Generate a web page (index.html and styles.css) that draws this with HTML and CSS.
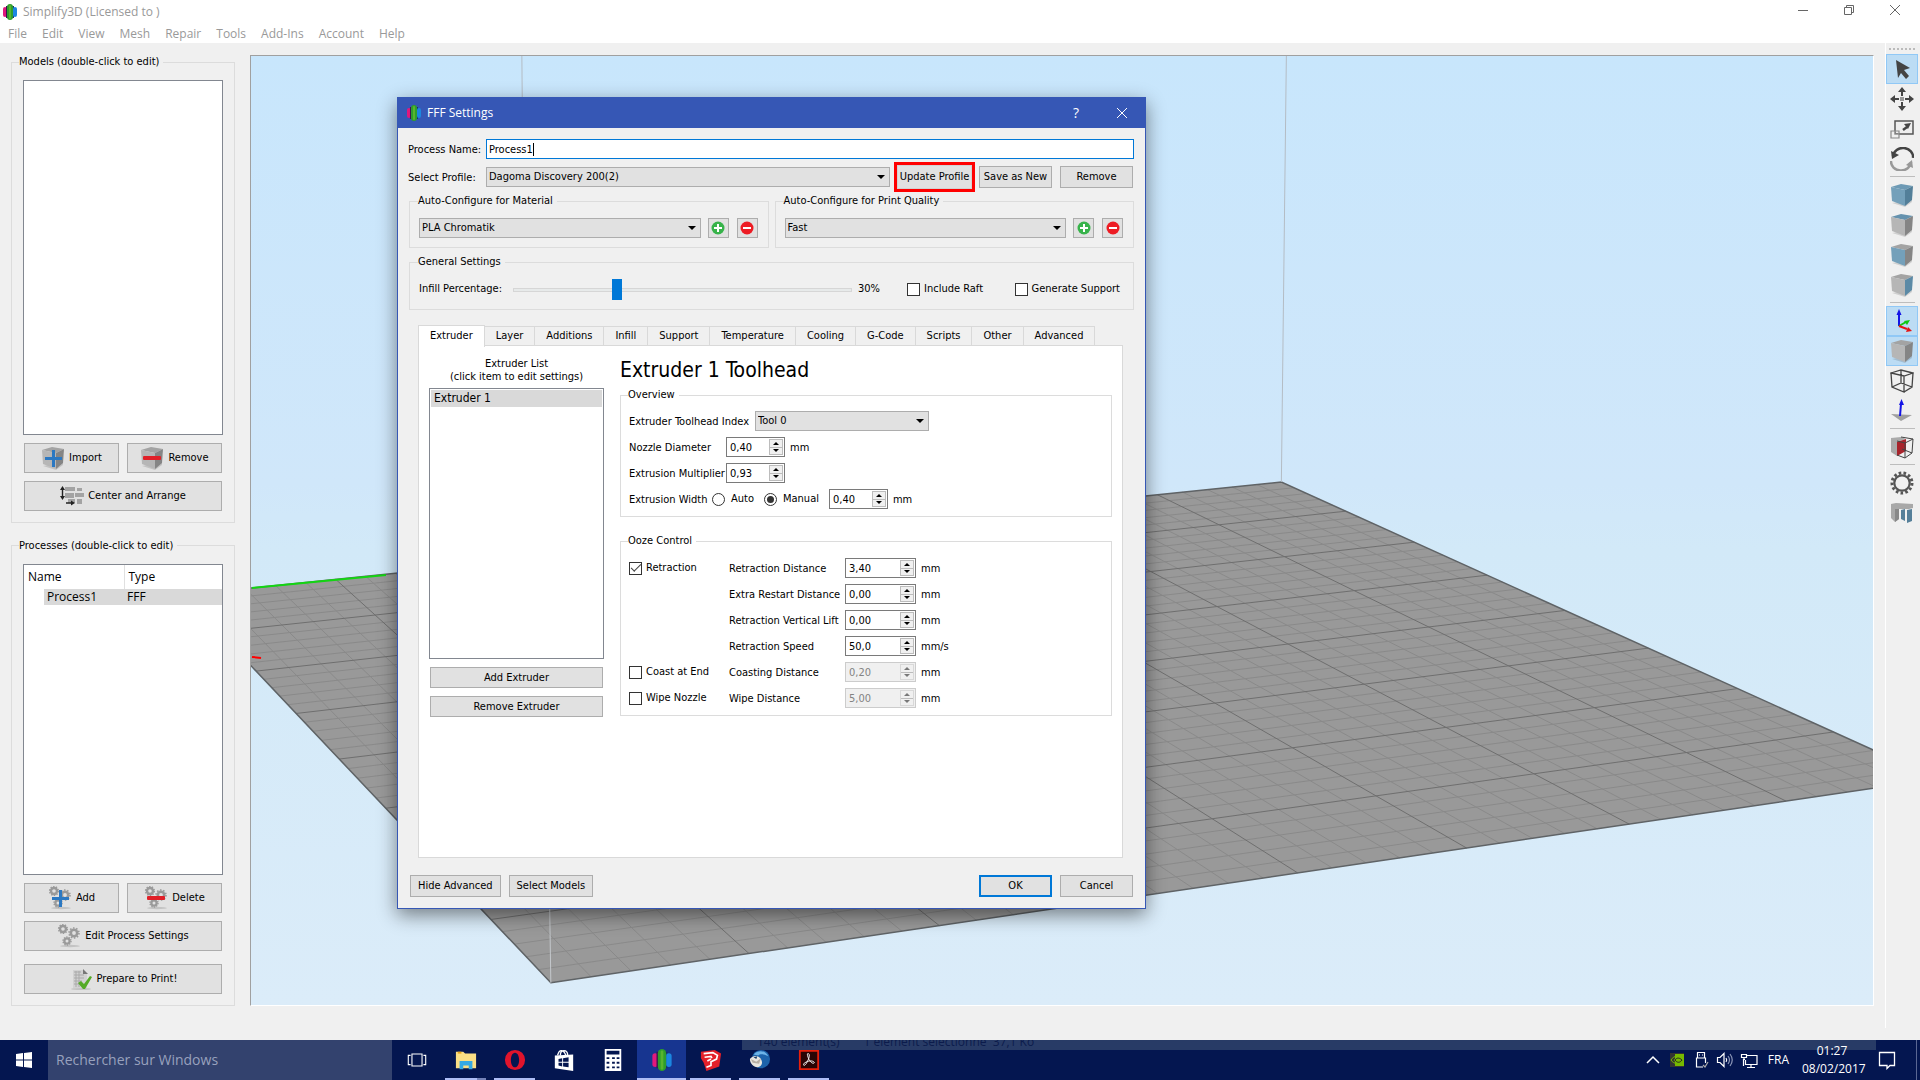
FILE: index.html
```html
<!DOCTYPE html>
<html lang="en">
<head>
<meta charset="utf-8">
<title>Simplify3D</title>
<link rel="stylesheet" href="styles.css">
</head>
<body>
<svg class="defs" aria-hidden="true">
  <symbol id="logo" viewBox="0 0 14 16">
    <rect x="0" y="3" width="4" height="10" rx="2" fill="#e0187c"/>
    <rect x="3" y="2" width="2" height="12" fill="#3b1352"/>
    <rect x="9" y="2" width="2" height="12" fill="#14306e"/>
    <rect x="10" y="3" width="4" height="10" rx="2" fill="#1b86e0"/>
    <rect x="4" y="0" width="6" height="16" rx="3" fill="#2e9e2b"/>
    <rect x="6" y="1" width="2" height="14" rx="1" fill="#58b52e"/>
  </symbol>
  <symbol id="cube" viewBox="0 0 24 24">
    <path d="M2 20l13 4 7-5v-3z" fill="#00000022"/>
    <path class="face-top" d="M1 4l10-3 12 2-8 4z"/>
    <path class="face-front" d="M1 4l14 3v16L2 18z"/>
    <path class="face-side" d="M15 7l8-4-1 14-7 6z"/>
  </symbol>
  <symbol id="gears" viewBox="0 0 24 24">
    <ellipse cx="13" cy="22" rx="10" ry="1.2" fill="#00000022"/>
    <g fill="none" stroke="#9a9a9a">
      <circle cx="6" cy="5" r="3" stroke-width="2.4"/><circle cx="6" cy="5" r="4.4" stroke-width="1.4" stroke-dasharray="1.4 1.36"/>
      <circle cx="17" cy="9" r="3.2" stroke-width="2.6"/><circle cx="17" cy="9" r="5" stroke-width="1.6" stroke-dasharray="1.5 1.64"/>
      <circle cx="10" cy="17" r="2.6" stroke-width="2.2"/><circle cx="10" cy="17" r="4" stroke-width="1.4" stroke-dasharray="1.3 1.21"/>
    </g>
  </symbol>
  <symbol id="plus" viewBox="0 0 24 24"><path d="M11 4h3v7h7v3h-7v7h-3v-7H4v-3h7z" fill="#2b78c2"/></symbol>
  <symbol id="minus" viewBox="0 0 24 24"><rect x="3" y="10" width="18" height="4" rx="1" fill="#e02028"/></symbol>
  <symbol id="add-round" viewBox="0 0 14 14"><circle cx="7" cy="7" r="6.5" fill="#37b34a"/><path d="M6 3h2v3h3v2H8v3H6V8H3V6h3z" fill="#fff"/></symbol>
  <symbol id="del-round" viewBox="0 0 14 14"><circle cx="7" cy="7" r="6.5" fill="#ed1c24"/><path d="M3 6h8v2H3z" fill="#fff"/></symbol>
</svg>

<div class="app">
  <header class="titlebar">
    <svg class="logo"><use href="#logo"/></svg>
    <span class="app-title">Simplify3D (Licensed to )</span>
    <div class="win-buttons">
      <button aria-label="Minimize"><svg viewBox="0 0 10 10"><path d="M0 5.500h10"/></svg></button>
      <button aria-label="Restore"><svg viewBox="0 0 10 10"><path d="M.5 2.500h7v7h-7zM2.500 2.500v-2h7v7h-2"/></svg></button>
      <button aria-label="Close"><svg viewBox="0 0 10 10"><path d="M0 0l10 10M10 0L0 10"/></svg></button>
    </div>
  </header>
  <nav class="menubar">
    <a href="#">File</a><a href="#">Edit</a><a href="#">View</a><a href="#">Mesh</a><a href="#">Repair</a><a href="#">Tools</a><a href="#">Add-Ins</a><a href="#">Account</a><a href="#">Help</a>
  </nav>

  <main class="workspace">
    <aside class="sidebar">
      <fieldset class="group side-group">
        <legend>Models (double-click to edit)</legend>
        <div class="list"></div>
        <div class="btn-row">
          <button class="btn"><span class="icon"><svg class="cube gray"><use href="#cube"/></svg><svg><use href="#plus"/></svg></span>Import</button>
          <button class="btn"><span class="icon"><svg class="cube gray"><use href="#cube"/></svg><svg><use href="#minus"/></svg></span>Remove</button>
        </div>
        <button class="btn"><span class="icon"><svg viewBox="0 0 24 24">
          <path d="M5 3h10v4H5zM17 4h5v3h-5zM5 9h9v5H5zM15 9h9v4h-9zM8 15h7v4H8zM17 15h5v5h-5z" fill="#a3a3a3"/>
          <path d="M2.500 4v10M6 19h7" stroke="#222" stroke-width="1.400"/><path d="M2.500 2L5 6H0zM2.500 16L5 12H0zM15 19l-4-2.500v5z" fill="#222"/></svg></span>Center and Arrange</button>
      </fieldset>
      <fieldset class="group side-group">
        <legend>Processes (double-click to edit)</legend>
        <div class="list">
          <table class="processes">
            <thead><tr><th>Name</th><th>Type</th></tr></thead>
            <tbody><tr><td><span>Process1</span></td><td>FFF</td></tr></tbody>
          </table>
        </div>
        <div class="btn-row">
          <button class="btn"><span class="icon"><svg><use href="#gears"/></svg><svg><use href="#plus"/></svg></span>Add</button>
          <button class="btn"><span class="icon"><svg><use href="#gears"/></svg><svg><use href="#minus"/></svg></span>Delete</button>
        </div>
        <button class="btn"><span class="icon"><svg><use href="#gears"/></svg></span>Edit Process Settings</button>
        <button class="btn prepare"><span class="icon"><svg viewBox="0 0 24 24">
          <path d="M4 3h10v4h4v14H4z" fill="#d2d2d2"/><path d="M14 2l5 5h-5z" fill="#777"/>
          <path d="M5 5h7M5 8h10M5 11h10M5 14h8M5 17h6M7 4v16M10 4v16" stroke="#aaa"/><ellipse cx="12" cy="22" rx="10" ry="1" fill="#00000022"/>
          <path d="M9 16l3-2 3 3 6-8 2 1-7 12h-2z" fill="#54ab27"/></svg></span>Prepare to Print!</button>
      </fieldset>
    </aside>

    <section class="viewport" aria-label="3D view">
      <svg id="scene" viewBox="250 55 1623 951" preserveAspectRatio="xMidYMid slice">
        <g id="plate"></g>
        <path d="M251 588L385 575" stroke="#12d612" stroke-width="2"/>
        <path d="M251 657l9 1" stroke="#f00" stroke-width="2"/>
        <path d="M521 55L526 560M1286 55L1281 482" stroke="#b4bcc4" fill="none"/>
        <path d="M548 850L550 983" stroke="#c4c8cc" fill="none"/>
      </svg>
    </section>

    <div class="toolbar" role="toolbar" aria-label="View tools">
      <div class="grip"></div>
      <button class="tool active" aria-label="Select"><svg viewBox="0 0 24 24"><path d="M6 3l14 8-6 2 5 6-3 3-5-6-3 5z" fill="#444"/></svg></button>
      <button class="tool" aria-label="Move"><svg viewBox="0 0 24 24"><path d="M12 0l4 5h-3v4h-2V5H8zM12 24l4-5h-3v-4h-2v4H8zM0 12l5-4v3h4v2H5v3zM24 12l-5-4v3h-4v2h4v3z" fill="#444"/><path d="M10 10h4v4h-4z" fill="#999"/></svg></button>
      <button class="tool" aria-label="Scale"><svg viewBox="0 0 24 24"><path d="M5 4h18v13H5z" fill="#eee" stroke="#555" stroke-width="1.500"/><path d="M13 13l4-3" stroke="#444" stroke-width="2.500"/><path d="M21 6l-3 6-4-5z" fill="#444"/><path d="M1 14h8v7H1zM5 14v3h4" fill="#eeeeeeaa" stroke="#888" stroke-width="1.200"/></svg></button>
      <button class="tool" aria-label="Rotate"><svg viewBox="0 0 24 24"><path d="M3 9a10 9 0 0 1 20 2" fill="none" stroke="#444" stroke-width="2.500"/><path d="M1 4l1 8 7-4z" fill="#444"/><path d="M21 15a10 9 0 0 1-20-1" fill="none" stroke="#999" stroke-width="2.500"/><path d="M23 21l-1-8-6 5z" fill="#999"/></svg></button>
      <hr>
      <button class="tool" aria-label="Default view"><svg class="cube blue"><use href="#cube"/></svg></button>
      <button class="tool" aria-label="Top view"><svg class="cube gray blue-top"><use href="#cube"/></svg></button>
      <button class="tool" aria-label="Front view"><svg class="cube gray blue-front"><use href="#cube"/></svg></button>
      <button class="tool" aria-label="Side view"><svg class="cube gray blue-side"><use href="#cube"/></svg></button>
      <hr>
      <button class="tool active" aria-label="Show axes"><svg viewBox="0 0 24 24" fill="none" stroke-width="2"><path d="M9 17V5" stroke="#1414e6"/><path d="M9 0l2.500 6h-5z" fill="#1414e6"/><path d="M9 17l7-4" stroke="#12c812"/><path d="M20 11l-3 5-3-4z" fill="#12c812"/><path d="M9 17l8 3" stroke="#e61414"/><path d="M22 22l-6 1 2-5z" fill="#e61414"/></svg></button>
      <button class="tool active" aria-label="Solid models"><svg class="cube gray"><use href="#cube"/></svg></button>
      <button class="tool" aria-label="Wireframe"><svg viewBox="0 0 24 24" fill="none" stroke="#444" stroke-width="1.300"><path d="M1 4l10-3 12 3-9 3zM1 4l1 14 12 5V7M23 4l-1 14-8 5M2 18l9-4 11 4M11 1v13"/></svg></button>
      <button class="tool" aria-label="Normals"><svg viewBox="0 0 24 24"><path d="M1 15l21 1-11 6z" fill="#a0a0a0"/><path d="M10 17l1-12" stroke="#1414e6" stroke-width="2"/><path d="M11.500 0l2.500 6H9z" fill="#1414e6"/></svg></button>
      <hr>
      <button class="tool" aria-label="Cross section"><svg viewBox="0 0 24 24"><path d="M1 3l10-1 5 2-9 3v14l-6-4z" fill="#aaa"/><path d="M7 7l9-3v12l-9 5z" fill="#a8242c"/><path d="M11 2l12 2-8 4-8-2M15 8v15l-8-3M23 4l-1 14-7 5M12 14l10 4" fill="none" stroke="#444"/></svg></button>
      <hr>
      <button class="tool" aria-label="Options"><svg viewBox="0 0 24 24" fill="none" stroke="#555"><circle cx="12" cy="12" r="7.700" stroke-width="2.200"/><circle cx="12" cy="12" r="10" stroke-width="3" stroke-dasharray="2.600 2.230"/></svg></button>
      <button class="tool" aria-label="Supports"><svg viewBox="0 0 24 24"><path d="M1 3l5-1 17 1v4l-4 1-10 0v10l-4 3-4-4z" fill="#a8a8a8"/><path d="M5 8h4v10l-4 3z" fill="#888"/><path d="M11 9l4-1v12l-4-2zM17 9l5-1v12l-5 2z" fill="#557f99"/></svg></button>
    </div>

    <section class="dialog" role="dialog" aria-labelledby="dlg-title">
      <header class="dialog-title">
        <svg class="logo"><use href="#logo"/></svg>
        <span id="dlg-title">FFF Settings</span>
        <button aria-label="Help" class="help">?</button>
        <button aria-label="Close"><svg viewBox="0 0 10 10"><path d="M0 0l10 10M10 0L0 10"/></svg></button>
      </header>
      <form class="dialog-body" onsubmit="return false">
        <div class="row name-row">
          <label class="head-label" for="pname">Process Name:</label>
          <span class="name-field"><input id="pname" type="text" value="Process1"><i class="caret"></i></span>
        </div>
        <div class="row profile-row">
          <label class="head-label" for="profile">Select Profile:</label>
          <span class="combo"><select id="profile"><option>Dagoma Discovery 200(2)</option></select></span>
          <span class="highlight"><button class="btn">Update Profile</button></span>
          <button class="btn std">Save as New</button>
          <button class="btn std">Remove</button>
        </div>
        <div class="auto-row">
          <fieldset class="group auto-group">
            <legend>Auto-Configure for Material</legend>
            <span class="combo"><select aria-label="Material"><option>PLA Chromatik</option></select></span>
            <button class="btn mini" aria-label="Add material"><svg><use href="#add-round"/></svg></button>
            <button class="btn mini" aria-label="Remove material"><svg><use href="#del-round"/></svg></button>
          </fieldset>
          <fieldset class="group auto-group">
            <legend>Auto-Configure for Print Quality</legend>
            <span class="combo"><select aria-label="Print quality"><option>Fast</option></select></span>
            <button class="btn mini" aria-label="Add quality"><svg><use href="#add-round"/></svg></button>
            <button class="btn mini" aria-label="Remove quality"><svg><use href="#del-round"/></svg></button>
          </fieldset>
        </div>
        <fieldset class="group general">
          <legend>General Settings</legend>
          <label class="infill-label" for="infill">Infill Percentage:</label>
          <input id="infill" type="range" min="0" max="100" value="30">
          <output for="infill">30%</output>
          <label class="check"><input type="checkbox">Include Raft</label>
          <label class="check"><input type="checkbox">Generate Support</label>
        </fieldset>

        <div class="tabs" role="tablist">
          <button class="tab selected" role="tab">Extruder</button><button class="tab" role="tab">Layer</button><button class="tab" role="tab">Additions</button><button class="tab" role="tab">Infill</button><button class="tab" role="tab">Support</button><button class="tab" role="tab">Temperature</button><button class="tab" role="tab">Cooling</button><button class="tab" role="tab">G-Code</button><button class="tab" role="tab">Scripts</button><button class="tab" role="tab">Other</button><button class="tab" role="tab">Advanced</button>
        </div>
        <div class="panel">
          <div class="extruders">
            <div class="list-caption">Extruder List<br>(click item to edit settings)</div>
            <ul class="list"><li>Extruder 1</li></ul>
            <button class="btn">Add Extruder</button>
            <button class="btn">Remove Extruder</button>
          </div>
          <div class="details">
            <h1>Extruder 1 Toolhead</h1>
            <fieldset class="group overview">
              <legend>Overview</legend>
              <div class="row"><label class="tool-label" for="tool">Extruder Toolhead Index</label><span class="combo tool-combo"><select id="tool"><option>Tool 0</option></select></span></div>
              <div class="row"><label class="ov-label" for="nozzle">Nozzle Diameter</label><span class="spin"><input id="nozzle" type="text" value="0,40"><span class="steps"><button aria-label="Up"></button><button aria-label="Down"></button></span></span><span class="unit">mm</span></div>
              <div class="row"><label class="ov-label" for="mult">Extrusion Multiplier</label><span class="spin"><input id="mult" type="text" value="0,93"><span class="steps"><button aria-label="Up"></button><button aria-label="Down"></button></span></span></div>
              <div class="row"><span class="width-label">Extrusion Width</span><label class="radio"><input type="radio" name="w">Auto</label><label class="radio"><input type="radio" name="w" checked>Manual</label><span class="spin"><input type="text" value="0,40" aria-label="Extrusion width"><span class="steps"><button aria-label="Up"></button><button aria-label="Down"></button></span></span><span class="unit">mm</span></div>
            </fieldset>
            <fieldset class="group ooze">
              <legend>Ooze Control</legend>
              <div class="row"><label class="check"><input type="checkbox" checked>Retraction</label><label class="oz-label" for="o1">Retraction Distance</label><span class="spin wide"><input id="o1" type="text" value="3,40"><span class="steps"><button aria-label="Up"></button><button aria-label="Down"></button></span></span><span class="unit">mm</span></div>
              <div class="row"><span class="check"></span><label class="oz-label" for="o2">Extra Restart Distance</label><span class="spin wide"><input id="o2" type="text" value="0,00"><span class="steps"><button aria-label="Up"></button><button aria-label="Down"></button></span></span><span class="unit">mm</span></div>
              <div class="row"><span class="check"></span><label class="oz-label" for="o3">Retraction Vertical Lift</label><span class="spin wide"><input id="o3" type="text" value="0,00"><span class="steps"><button aria-label="Up"></button><button aria-label="Down"></button></span></span><span class="unit">mm</span></div>
              <div class="row"><span class="check"></span><label class="oz-label" for="o4">Retraction Speed</label><span class="spin wide"><input id="o4" type="text" value="50,0"><span class="steps"><button aria-label="Up"></button><button aria-label="Down"></button></span></span><span class="unit">mm/s</span></div>
              <div class="row"><label class="check"><input type="checkbox">Coast at End</label><label class="oz-label" for="o5">Coasting Distance</label><span class="spin wide off"><input id="o5" type="text" value="0,20" disabled><span class="steps"><button aria-label="Up" disabled></button><button aria-label="Down" disabled></button></span></span><span class="unit">mm</span></div>
              <div class="row"><label class="check"><input type="checkbox">Wipe Nozzle</label><label class="oz-label" for="o6">Wipe Distance</label><span class="spin wide off"><input id="o6" type="text" value="5,00" disabled><span class="steps"><button aria-label="Up" disabled></button><button aria-label="Down" disabled></button></span></span><span class="unit">mm</span></div>
            </fieldset>
          </div>
        </div>
        <footer class="actions">
          <button class="btn">Hide Advanced</button>
          <button class="btn">Select Models</button>
          <span class="spacer"></span>
          <button class="btn std default">OK</button>
          <button class="btn std">Cancel</button>
        </footer>
      </form>
    </section>
  </main>

  <footer class="taskbar">
    <div class="ghost"><span>140 élément(s)</span><span>1 élément sélectionné&nbsp; 37,1 Ko</span></div>
    <button class="start" aria-label="Start"><svg viewBox="0 0 16 16"><path d="M0 2l7-1v6.500H0zM8 1l8-1v7.500H8zM0 8.500h7V15l-7-1zM8 8.500h8V16l-8-1z" fill="#fff"/></svg></button>
    <input class="search" type="text" placeholder="Rechercher sur Windows" aria-label="Rechercher">
    <button class="task" aria-label="Task view"><svg viewBox="0 0 24 24" fill="none" stroke="#fff" stroke-width="1.200"><path d="M6.500 5.500h11v13h-11zM5 7H2.500v10H5M19 7h2.500v10H19"/></svg></button>
    <button class="task open more" aria-label="Explorer"><svg viewBox="0 0 24 24"><path d="M1 3h8l2 2h12v16H1z" fill="#fbdf85"/><path d="M3 3h4v2H3z" fill="#e8a317"/><path d="M5 13h14v9h-4v-4H9v4H5z" fill="#35a9e4"/></svg></button>
    <button class="task open" aria-label="Opera"><svg viewBox="0 0 24 24"><path fill-rule="evenodd" d="M12 1a11 11 0 1 0 0 22 11 11 0 1 0 0-22zm0 3c3 0 4.500 4 4.500 8S15 20 12 20s-4.500-4-4.500-8S9 4 12 4z" fill="#e0142c"/></svg></button>
    <button class="task" aria-label="Store"><svg viewBox="0 0 24 24"><path d="M8 7c0-7 8-7 8 0M5 7c2-8 7-6 9 0" fill="none" stroke="#fff" stroke-width="1.500"/><path d="M2 7l20-1v18L2 21z" fill="#fff"/><path d="M6 11l4-1v4H6zM11 10l6-1v5h-6zM6 15h4v4l-4-1zM11 15h6v5l-6-1z" fill="#041650"/></svg></button>
    <button class="task" aria-label="Calculator"><svg viewBox="0 0 24 24"><path d="M3 0h18v24H3z" fill="#fff"/><path d="M5 2h14v4H5zM5 9h3v2H5zM11 9h3v2h-3zM16 9h3v2h-3zM5 14h3v2H5zM11 14h3v2h-3zM16 14h3v2h-3zM5 19h3v2H5zM11 19h3v2h-3zM16 19h3v2h-3z" fill="#041650"/></svg></button>
    <button class="task open current" aria-label="Simplify3D"><svg><use href="#logo"/></svg></button>
    <button class="task open" aria-label="SketchUp"><svg viewBox="0 0 24 24"><path d="M1 3l15-2 7 4-2 14-14 5-3-9-3-5z" fill="#e3202a"/><path d="M4 5l10-1 5 3-1 4-6 3v4l-5 2M5 9l7-1 1 2M8 13l4-2" fill="none" stroke="#fff" stroke-width="1.800"/></svg></button>
    <button class="task open" aria-label="Thunderbird"><svg viewBox="0 0 24 24"><circle cx="13" cy="11" r="10" fill="#1d63ab"/><path d="M5 6c5-6 14-4 16 2-5-3-9-3-11-1z" fill="#6db4e8"/><path d="M1 11c3-4 9-5 12 0 3 5 0 9-4 9s-8-4-8-9z" fill="#e9e6e0"/><path d="M2 11l6 3 5-4-2 6-7-1z" fill="#b7afa5"/><path d="M5 9l4-1-1 3z" fill="#163a66"/></svg></button>
    <button class="task open" aria-label="Acrobat"><svg viewBox="0 0 24 24"><path d="M2 2h20v20H2z" fill="#2a0505" stroke="#e8200c" stroke-width="2"/><path d="M11 5c2 0 2 4-1 9-1 3-4 5-4 3s5-4 8-4 5 2 3 2.500-5-3-6-6.500-1-4 0-4z" fill="none" stroke="#fff"/></svg></button>
    <span class="spacer"></span>
    <div class="tray">
      <svg viewBox="0 0 24 24" fill="none" stroke="#fff" stroke-width="1.500"><path d="M6 15l6-6 6 6"/></svg>
      <svg viewBox="0 0 24 24"><path d="M5 5h14v14H5z" fill="#333"/><path d="M10 6h9v12h-9z" fill="#76b900"/><path d="M6 12c3-5 9-5 12 0-3 4-9 5-12 0zM9 12c2-2 4-2 6 0-2 2-5 2-6 0z" fill="none" stroke="#76b900"/><path d="M10 12c2-3 5-2 7 0-2 3-5 3-7 0z" fill="none" stroke="#222"/></svg>
      <svg viewBox="0 0 24 24" fill="none" stroke="#fff" stroke-width="1.200"><path d="M14 19H7.500V10h9v5M8.500 10V4.500h7V10M10 7h1M13 7h1"/><path d="M14 17l2 2 3-5" stroke="#aaa"/></svg>
      <svg viewBox="0 0 24 24" fill="none" stroke="#fff" stroke-width="1.200"><path d="M4.500 9.500v5H7l4 4v-13l-4 4z"/><path d="M13 10q1.500 2 0 4"/><path d="M15 8q3 4 0 8M17 6q4.500 6 0 12" stroke="#8d97b8"/></svg>
      <svg viewBox="0 0 24 24" fill="none" stroke="#fff" stroke-width="1.200"><path d="M9 7.500h11v9H8.500V12M14 16.500v3M10 19.500h8M4.500 6.500h5v3h-5zM7 9.500v2H8M6.500 11v7"/></svg>
      <span class="lang">FRA</span>
      <time>01:27<br>08/02/2017</time>
      <svg class="notify" viewBox="0 0 24 24" fill="none" stroke="#fff" stroke-width="1.300"><path d="M4.500 4.500h15v13H15l-3 3v-3H4.500z"/></svg>
    </div>
  </footer>
</div>
<script src="scene.js"></script>
</body>
</html>
```
FILE: styles.css
```css
:root {
  --ui: "DejaVu Sans Condensed", "Noto Sans", sans-serif;
  --shell: "Open Sans", "Noto Sans", sans-serif;
  --face: #e1e1e1;
  --edge: #adadad;
  --bg: #f0f0f0;
  --line: #dcdcdc;
  --accent: #0078d7;
}
* { box-sizing: border-box; }
body { margin: 0; background: var(--bg); color: #000; font: 11px/14px var(--ui); overflow: hidden; }
button, input, select { font: inherit; color: inherit; margin: 0; padding: 0; border: 0; background: none; }
a { color: inherit; text-decoration: none; }
.defs { display: none; }
.app { display: flex; flex-direction: column; height: 100vh; }
.spacer { flex: 1; }
.logo { width: 14px; height: 16px; }

.titlebar, .menubar { display: flex; align-items: center; background: #fff; color: #999; font: 12px/16px var(--shell); }
.titlebar { height: 24px; padding: 0 2px 0 3px; gap: 6px; }
.win-buttons { display: flex; margin-left: auto; align-self: flex-start; }
.win-buttons button { width: 46px; height: 20px; display: grid; place-items: center; }
.win-buttons svg, .dialog-title button svg { width: 10px; height: 10px; fill: none; stroke: #666; overflow: visible; }
.menubar { height: 19px; padding-left: 8px; gap: 15px; }

.workspace { position: relative; flex: 1; min-height: 0; display: flex; padding: 12px 0 34px; }
.sidebar { width: 250px; padding: 0 15px 0 11px; display: flex; flex-direction: column; gap: 16px; }
.group { margin: 0; min-width: 0; border: 1px solid var(--line); padding: 11px; }
.group legend { padding: 0 4px 0 0; margin-left: -1px; line-height: 14px; }
.side-group { flex: 1; display: flex; flex-direction: column; gap: 8px; min-height: 0; }
.side-group legend { margin-left: -4px; }
.list { background: #fff; border: 1px solid #828790; margin: 0; padding: 0; list-style: none; }
.side-group .list { flex: 1; }
.btn { display: inline-flex; align-items: center; justify-content: center; background: var(--face); border: 1px solid var(--edge); white-space: nowrap; }
.side-group .btn { height: 30px; margin: 0 1px; gap: 4px; }
.side-group .prepare { margin-top: 5px; }
.btn-row { display: grid; grid-template-columns: 1fr 1fr; gap: 6px; }
.icon { display: grid; width: 24px; height: 24px; }
.icon svg { grid-area: 1 / 1; width: 24px; height: 24px; }
.processes { width: 100%; border-collapse: collapse; font: 12px/16px var(--shell); }
.processes th { height: 24px; font-weight: 400; text-align: left; padding: 1px 4px 0; }
.processes th:first-child { width: 100px; border-right: 1px solid #e0e0e0; }
.processes td { height: 16px; padding: 0; }
.processes td:first-child { padding-left: 20px; }
.processes td span { display: block; padding-left: 3px; background: #d9d9d9; }
.processes td:last-child { padding-left: 3px; background: #d9d9d9; }

.viewport { flex: 1; min-width: 0; border-left: 1px solid #a0a0a0; border-top: 1px solid #a0a0a0; border-right: 1px solid #fff; border-bottom: 1px solid #fff; background: linear-gradient(#c8e6fc, #d0e7fa 45%, #d2e9f8 52%, #dbecf9); }
#scene { display: block; width: 100%; height: 100%; }
.toolbar { width: 46px; margin: -12px 0 -22px; padding: 5px 2px 0 12px; display: flex; flex-direction: column; align-items: stretch; background: linear-gradient(90deg, var(--bg) 11px, #fff 11px, #fff 12px, var(--bg) 12px); }
.grip { height: 2px; margin: 0 3px 4px; background: repeating-linear-gradient(90deg, #bbb 0 2px, transparent 2px 4px); }
.tool { height: 30px; display: grid; place-items: center; border: 1px solid transparent; }
.tool.active { background: #bcdcf4; border-color: #90c8f6; }
.tool svg { width: 24px; height: 24px; }
.toolbar hr { width: 25px; height: 1px; border: 0; margin: 2px auto 3px; background: #bdbdbd; }
.cube { --t: #a3a3a3; --f: #b6b6b6; --s: #858585; }
.cube.blue { --t: #6d9ab5; --f: #74a0ba; --s: #537f99; }
.blue-top { --t: #6592ae; }
.blue-front { --f: #74a0ba; }
.blue-side { --s: #5c8aa6; }
.face-top { fill: var(--t); }
.face-front { fill: var(--f); }
.face-side { fill: var(--s); }

.dialog { position: absolute; left: 397px; top: 54px; width: 749px; background: var(--bg); border: 1px solid #3657b5; box-shadow: 0 6px 18px #0007; }
.dialog-title { height: 30px; padding-left: 9px; display: flex; align-items: center; background: #3657b5; color: #fff; font: 12px/16px var(--shell); }
.dialog-title .logo { margin-right: 6px; }
.dialog-title button { width: 46px; height: 30px; display: grid; place-items: center; }
.dialog-title button svg { stroke: #fff; }
.dialog-title .help { margin-left: auto; font-size: 14px; }
.dialog-body { padding: 11px; }
.dialog-body input, .dialog-body select { padding-top: 1px; }
.row { display: flex; align-items: center; }
.row > label, .unit, .width-label { padding-top: 2px; }
.row > .check, .row > .radio { padding-top: 0; }
.head-label { width: 78px; white-space: nowrap; }
.dialog-body > .row { margin-left: -1px; }
.name-field { position: relative; flex: 1; display: flex; }
.name-field input { width: 100%; height: 20px; padding: 0 2px; background: #fff; border: 1px solid var(--accent); }
.caret { position: absolute; left: 47px; top: 4px; width: 1px; height: 13px; background: #000; }
.profile-row { margin-top: 3px; height: 30px; gap: 8px; padding-right: 1px; }
.profile-row .head-label { margin-right: -8px; }
.profile-row .combo { flex: 1; margin-right: -4px; }
.highlight { border: 3px solid #f00; margin-right: -4px; height: 30px; display: flex; }
.highlight .btn { width: 75px; height: 24px; border-color: #d2d2d2; }
.std { width: 73px; height: 22px; }
.combo { position: relative; display: flex; }
.combo select { appearance: none; width: 100%; height: 20px; padding: 0 2px; background: var(--face); border: 1px solid var(--edge); border-radius: 0; }
.combo::after { content: ""; position: absolute; right: 5px; top: 8px; border: 4px solid transparent; border-top-color: #000; border-bottom: 0; pointer-events: none; }
.auto-row { display: grid; grid-template-columns: 1fr 1fr; gap: 6px; margin-top: 2px; }
.auto-group { display: flex; align-items: center; gap: 8px; padding: 9px 10px 9px 9px; height: 54px; }
.auto-group .combo { flex: 1; margin-right: -1px; }
.mini { width: 21px; height: 20px; }
.mini svg { width: 14px; height: 14px; }
.general { display: flex; align-items: center; margin-top: 7px; height: 55px; padding: 0 13px 0 9px; }
.infill-label { width: 94px; }
output { width: 55px; padding-left: 6px; }
.general .check:last-child { margin-left: auto; }
input[type="range"] { appearance: none; width: 339px; height: 22px; }
input[type="range"]::-webkit-slider-runnable-track { height: 4px; background: #e7eaea; border: 1px solid #d6d6d6; }
input[type="range"]::-webkit-slider-thumb { appearance: none; width: 10px; height: 21px; margin-top: -10px; background: var(--accent); }
.check, .radio { display: inline-flex; align-items: center; gap: 4px; white-space: nowrap; }
.dialog-body .check input, .dialog-body .radio input { appearance: none; width: 13px; height: 13px; padding: 0; border: 1px solid #333; background: #fff; display: grid; place-items: center; }
.check input:checked::before { content: ""; width: 9px; height: 4px; margin-top: -3px; border: solid #444; border-width: 0 0 1px 1px; transform: rotate(-45deg); }
.dialog-body .radio input { border-radius: 50%; }
.radio input:checked::before { content: ""; width: 7px; height: 7px; border-radius: 50%; background: #333; }

.tabs { display: flex; align-items: flex-end; height: 22px; margin: 14px 0 0 9px; }
.tab { height: 20px; flex: 0 0 auto; border: 1px solid #d9d9d9; border-left: 0; padding: 0 11px; }
.tab.selected { height: 22px; margin-bottom: -1px; background: #fff; border-left: 1px solid #d9d9d9; border-bottom: 0; padding-bottom: 2px; position: relative; }
.panel { margin: -1px 11px 0 9px; height: 513px; display: flex; gap: 16px; padding: 10px; background: #fff; border: 1px solid #d9d9d9; }
.extruders { width: 175px; display: flex; flex-direction: column; gap: 8px; }
.list-caption { text-align: center; line-height: 13px; padding-top: 1px; margin-bottom: -3px; white-space: nowrap; }
.extruders .list { height: 271px; padding: 1px; }
.extruders li { height: 17px; line-height: 17px; padding-left: 3px; background: #d9d9d9; font-size: 12px; }
.extruders .btn { height: 21px; margin: 0 1px; }
.details { flex: 1; min-width: 0; }
h1 { margin: 0; padding-top: 1px; font-size: 21px; line-height: 26px; font-weight: 400; }
.overview, .ooze { display: flex; flex-direction: column; gap: 6px; padding: 9px 8px 7px; }
.overview { margin-top: 5px; }
.ooze { margin-top: 17px; padding-top: 10px; }
.details .row { height: 20px; }
.tool-label { width: 126px; white-space: nowrap; }
.tool-combo { width: 174px; }
.ov-label { width: 97px; white-space: nowrap; }
.width-label { width: 83px; white-space: nowrap; }
.radio { gap: 6px; margin-right: 10px; }
.unit { margin-left: 5px; }
.spin { width: 59px; height: 20px; display: flex; border: 1px solid #7a7a7a; background: #fff; padding: 1px; }
.spin.wide { width: 71px; }
.spin input { flex: 1; min-width: 0; padding-left: 2px; }
.steps { width: 14px; display: flex; flex-direction: column; border: 1px solid #bcbcbc; background: #f0f0f0; }
.steps button { flex: 1; display: grid; place-items: center; }
.steps button + button { border-top: 1px solid #bcbcbc; }
.steps button::before { content: ""; border: 3px solid transparent; border-bottom-color: #000; border-top: 0; }
.steps button + button::before { border-top: 3px solid #000; border-bottom: 0; }
.off { border-color: #ccc; background: #f0f0f0; color: #838383; }
.off .steps { border-color: #d8d8d8; }
.off .steps button::before { opacity: .5; }
.ooze .check { width: 100px; }
.oz-label { width: 116px; white-space: nowrap; }
.actions { display: flex; gap: 8px; margin-top: 17px; padding: 0 1px; }
.actions .btn { height: 22px; padding: 0 7px; }
.actions .default { border: 2px solid var(--accent); }

.taskbar { position: relative; height: 40px; display: flex; background: #041650; color: #fff; font: 12px/18px var(--shell); }
.ghost { position: absolute; left: 742px; right: 44px; top: 0; height: 10px; overflow: hidden; background: #283b66; color: #0c1c4c; padding-left: 15px; display: flex; gap: 24px; line-height: 4px; }
.start { width: 48px; display: grid; place-items: center; }
.start svg { width: 16px; height: 16px; }
.search { width: 344px; padding: 0 8px; background: #33426e; font-size: 14px; }
.search::placeholder { color: #98a1bd; opacity: 1; }
.task { position: relative; width: 49px; display: grid; place-items: center; }
.task svg { width: 22px; height: 24px; }
.task.open::after { content: ""; position: absolute; left: 4px; right: 4px; bottom: 0; height: 2px; background: #aebdf5; }
.task.more::after { border-right: 9px solid #7482b8; }
.task.current { background: #173590; }
.task.current svg { width: 20px; height: 22px; }
.task.current::after { left: 0; right: 0; }
.tray { position: relative; display: flex; align-items: center; padding-right: 3px; margin-right: 3px; border-right: 1px solid #5a6793; }
.tray svg { width: 24px; height: 24px; }
.lang { margin: 0 13px 0 7px; }
.tray time { width: 60px; text-align: center; }
.tray .notify { margin: 0 14px 0 13px; }
```
FILE: scene.js
```js
// Build plate: a unit square projected onto its four screen corners.
const A = [550, 983], B = [1937, 779], C = [1281, 482], D = [183, 595];
const d1 = [B[0] - C[0], B[1] - C[1]];
const d2 = [D[0] - C[0], D[1] - C[1]];
const s = [A[0] - B[0] + C[0] - D[0], A[1] - B[1] + C[1] - D[1]];
const den = d1[0] * d2[1] - d2[0] * d1[1];
const g = (s[0] * d2[1] - d2[0] * s[1]) / den;
const h = (d1[0] * s[1] - s[0] * d1[1]) / den;

function project(u, v) {
  const w = g * u + h * v + 1;
  return [0, 1].map(i =>
    (((B[i] - A[i] + g * B[i]) * u + (D[i] - A[i] + h * D[i]) * v + A[i]) / w).toFixed(1)
  ).join(" ");
}

function add(d, attrs) {
  const path = document.createElementNS("http://www.w3.org/2000/svg", "path");
  path.setAttribute("d", d);
  for (const name in attrs) path.setAttribute(name, attrs[name]);
  document.getElementById("plate").appendChild(path);
}

const cells = 40;
let minor = "", major = "";
for (let n = 1; n < cells; n++) {
  const t = n / cells;
  const d = `M${project(t, 0)}L${project(t, 1)}M${project(0, t)}L${project(1, t)}`;
  if (n % 5) minor += d; else major += d;
}
const outline = `M${project(0, 0)}L${project(1, 0)}L${project(1, 1)}L${project(0, 1)}Z`;
add(outline, { fill: "#999" });
add(minor, { stroke: "#8a8a8a", "stroke-width": 1 });
add(major, { stroke: "#6e6e6e", "stroke-width": 1 });
add(outline, { fill: "none", stroke: "#5f6366", "stroke-width": 1.5 });
```
